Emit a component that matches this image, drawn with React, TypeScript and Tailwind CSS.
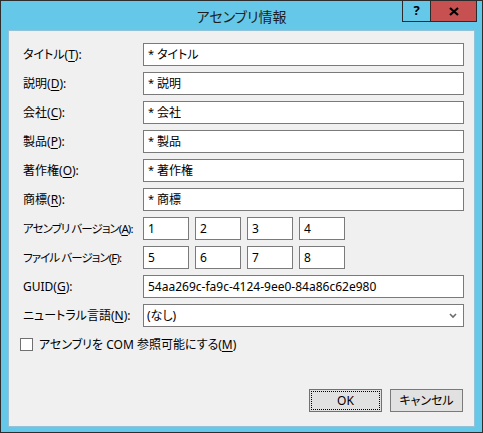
import React from "react";

const font =
  "font-['Noto_Sans','Noto_Sans_CJK_JP',sans-serif] [font-feature-settings:'palt']";

function Label({ pre, k, tight = false }: { pre: string; k: string; tight?: boolean }) {
  return (
    <div
      className={
        "w-[120px] shrink-0 whitespace-nowrap leading-none text-[#000] " +
        (tight ? "text-[11.5px] tracking-[-0.9px]" : "text-[12px]")
      }
    >
      {pre}(<span className="underline underline-offset-2">{k}</span>):
    </div>
  );
}

function TextBox({ value, className = "" }: { value: string; className?: string }) {
  return (
    <div
      className={
        "h-[23px] border border-[#7a7a7a] bg-white flex items-center pl-[4px] text-[12px] text-black whitespace-nowrap " +
        className
      }
    >
      {value}
    </div>
  );
}

function Row({ children }: { children: React.ReactNode }) {
  return <div className="flex items-center h-[23px]">{children}</div>;
}

export default function App() {
  const fields: [string, string, string][] = [
    ["タイトル", "T", "タイトル"],
    ["説明", "D", "説明"],
    ["会社", "C", "会社"],
    ["製品", "P", "製品"],
    ["著作権", "O", "著作権"],
    ["商標", "R", "商標"],
  ];
  return (
    <div className={"relative w-[483px] h-[433px] bg-[#65c8e8] border border-[#2d2d2d] flex flex-col " + font}>
      <div className="h-[29px] flex items-center justify-center text-[14px] text-[#1e1e1e] pt-[1px]">
        アセンブリ情報
      </div>
      <div className="absolute top-[-1px] right-[5px] flex h-[22px] border border-[#2b2b2b]">
        <div className="w-[27px] bg-[#65c8e8] flex items-center justify-center text-[13px] font-bold text-black">
          ?
        </div>
        <div className="w-[46px] bg-[#c75050] border-l border-[#2b2b2b] flex items-center justify-center">
          <svg width="10" height="9" viewBox="0 0 10 9">
            <path d="M1 1 L9 8 M9 1 L1 8" stroke="#000" strokeWidth="2.2" />
          </svg>
        </div>
      </div>
      <div className="mx-[7px] h-[397px] bg-[#f0f0f0] border border-[#93c2d9] flex flex-col pt-[12px] pl-[14px] pr-[10px] pb-[14px]">
        <div className="flex flex-col gap-[6px]">
          {fields.map(([l, k, v]) => (
            <Row key={k}>
              <Label pre={l} k={k} />
              <div className="flex-1 h-[23px] border border-[#7a7a7a] bg-white flex items-center pl-[4px] text-[12px] text-black whitespace-nowrap">
                <span className="text-[11px] mr-[3px] mt-[-1px]">*</span>
                {v}
              </div>
            </Row>
          ))}
          <Row>
            <Label pre="アセンブリ バージョン" k="A" tight />
            <div className="flex gap-[6px]">
              {["1", "2", "3", "4"].map((n) => (
                <TextBox key={n} value={n} className="w-[46px]" />
              ))}
            </div>
          </Row>
          <Row>
            <Label pre="ファイル バージョン" k="F" tight />
            <div className="flex gap-[6px]">
              {["5", "6", "7", "8"].map((n) => (
                <TextBox key={n} value={n} className="w-[46px]" />
              ))}
            </div>
          </Row>
          <Row>
            <Label pre="GUID" k="G" />
            <TextBox value="54aa269c-fa9c-4124-9ee0-84a86c62e980" className="flex-1" />
          </Row>
          <Row>
            <Label pre="ニュートラル言語" k="N" />
            <div className="flex-1 h-[23px] border border-[#7a7a7a] bg-white flex items-center pl-[3px] pr-[6px] text-[12px] text-black">
              <span className="flex-1">(なし)</span>
              <svg width="8" height="6" viewBox="0 0 8 6">
                <path d="M1 1 L4 4 L7 1" stroke="#6d6d6d" strokeWidth="1.6" fill="none" />
              </svg>
            </div>
          </Row>
        </div>
        <div className="flex items-center mt-[11px] ml-[-3px] h-[13px] text-[12px] text-black">
          <div className="w-[13px] h-[13px] border border-[#707070] bg-white shrink-0" />
          <span className="ml-[6px] whitespace-nowrap">
            アセンブリを COM 参照可能にする(<span className="underline underline-offset-2">M</span>)
          </span>
        </div>
        <div className="mt-auto flex justify-end gap-[8px] pr-[1px]">
          <div className="w-[73px] h-[23px] bg-[#e1e1e1] border border-[#3c7fb1] p-[1px]">
            <div className="w-full h-full border border-dotted border-black flex items-center justify-center text-[12px] text-black">
              OK
            </div>
          </div>
          <div className="w-[73px] h-[23px] bg-[#e1e1e1] border border-[#7a7a7a] flex items-center justify-center text-[12px] text-black">
            キャンセル
          </div>
        </div>
      </div>
    </div>
  );
}
